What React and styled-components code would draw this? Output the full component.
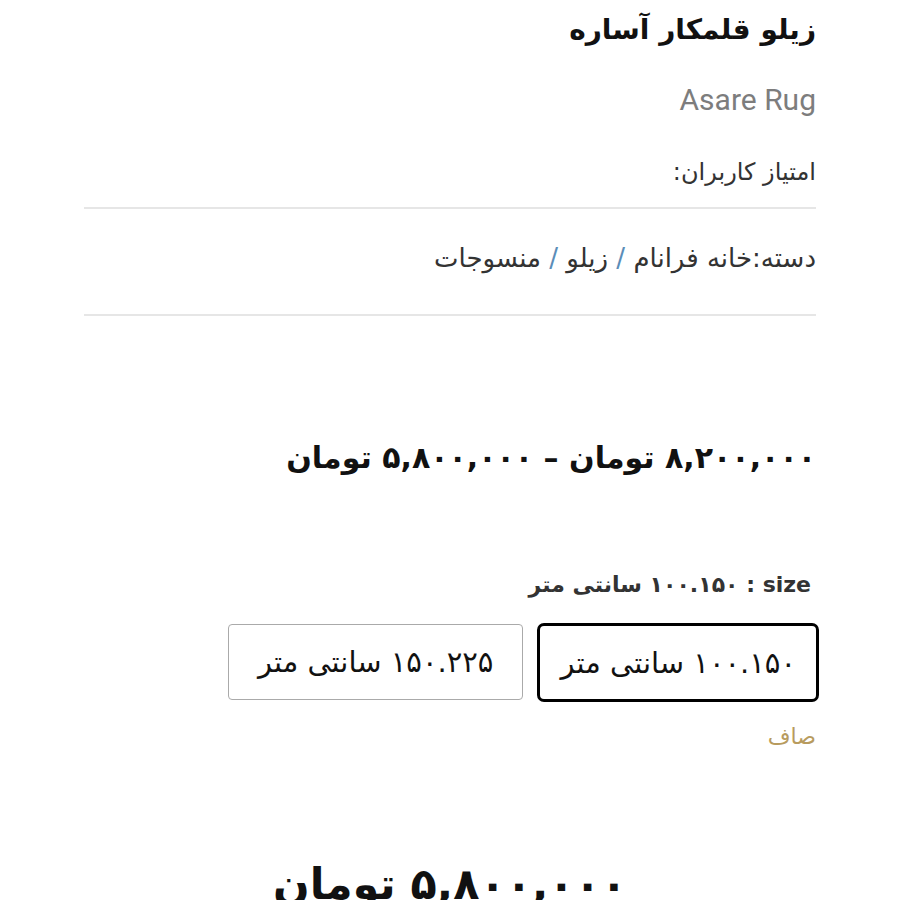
import { createGlobalStyle, styled } from "styled-components";

const GlobalStyle = createGlobalStyle`
  html, body {
    margin: 0;
    padding: 0;
    background: #fff;
  }
  body {
    font-family: "DejaVu Sans", "Noto Sans", sans-serif;
    color: #222;
  }
`;

const Page = styled.div`
  width: 732px;
  margin: 0 auto;
  direction: rtl;
  text-align: right;
`;

const Title = styled.h1`
  margin: 0;
  padding-top: 8px;
  font-size: 28px;
  font-weight: 700;
  color: #111;
  line-height: 44px;
`;

const EnglishName = styled.div`
  margin-top: 28px;
  font-family: Roboto, "Liberation Sans", sans-serif;
  font-size: 30px;
  color: #7d7d7d;
  line-height: 40px;
  direction: ltr;
  text-align: right;
`;

const Rating = styled.div`
  margin-top: 34px;
  font-size: 24px;
  color: #333;
  line-height: 36px;
  padding-bottom: 17px;
  border-bottom: 2px solid #e6e6e6;
`;

const Category = styled.div`
  padding: 31px 0 38px;
  font-size: 26px;
  color: #333;
  line-height: 36px;
  border-bottom: 2px solid #e6e6e6;
`;

const Slash = styled.span`
  color: #5b8db8;
`;

const PriceRange = styled.div`
  margin-top: 122px;
  font-size: 30px;
  font-weight: 700;
  color: #111;
  line-height: 40px;
`;

const SizeLabel = styled.div`
  margin-top: 90px;
  font-size: 22px;
  font-weight: 700;
  color: #333;
  line-height: 34px;
  padding-right: 5px;
`;

const Options = styled.div`
  display: flex;
  gap: 14px;
  margin-top: 21px;
  margin-right: -3px;
`;

const Option = styled.button`
  box-sizing: border-box;
  height: ${(p) => (p.$active ? "79px" : "76px")};
  margin-top: ${(p) => (p.$active ? "0" : "1px")};
  padding: 0 ${(p) => p.$pad || 20}px;
  background: #fff;
  border: ${(p) => (p.$active ? "3px solid #000" : "1.5px solid #aaa")};
  border-radius: ${(p) => (p.$active ? "7px" : "4px")};
  font-family: "DejaVu Sans", sans-serif;
  font-size: 29px;
  color: #111;
  direction: rtl;
  cursor: pointer;
`;

const Finish = styled.div`
  margin-top: 20px;
  font-size: 22px;
  color: #b89b5e;
  line-height: 30px;
`;

const BigPrice = styled.div`
  margin-top: 102px;
  text-align: center;
  font-size: 43px;
  font-weight: 700;
  color: #111;
  line-height: 60px;
`;

export default function App() {
  return (
    <>
      <GlobalStyle />
      <Page>
        <Title>زیلو قلمکار آساره</Title>
        <EnglishName>Asare Rug</EnglishName>
        <Rating>امتیاز کاربران:</Rating>
        <Category>
          دسته:خانه فرانام <Slash>/</Slash> زیلو <Slash>/</Slash> منسوجات
        </Category>
        <PriceRange>۸,۲۰۰,۰۰۰ تومان – ۵,۸۰۰,۰۰۰ تومان</PriceRange>
        <SizeLabel>
          <bdi>size</bdi> : ۱۰۰.۱۵۰ سانتی متر
        </SizeLabel>
        <Options>
          <Option $active>۱۰۰.۱۵۰ سانتی متر</Option>
          <Option $pad={29}>۱۵۰.۲۲۵ سانتی متر</Option>
        </Options>
        <Finish>صاف</Finish>
        <BigPrice>۵,۸۰۰,۰۰۰ تومان</BigPrice>
      </Page>
    </>
  );
}
